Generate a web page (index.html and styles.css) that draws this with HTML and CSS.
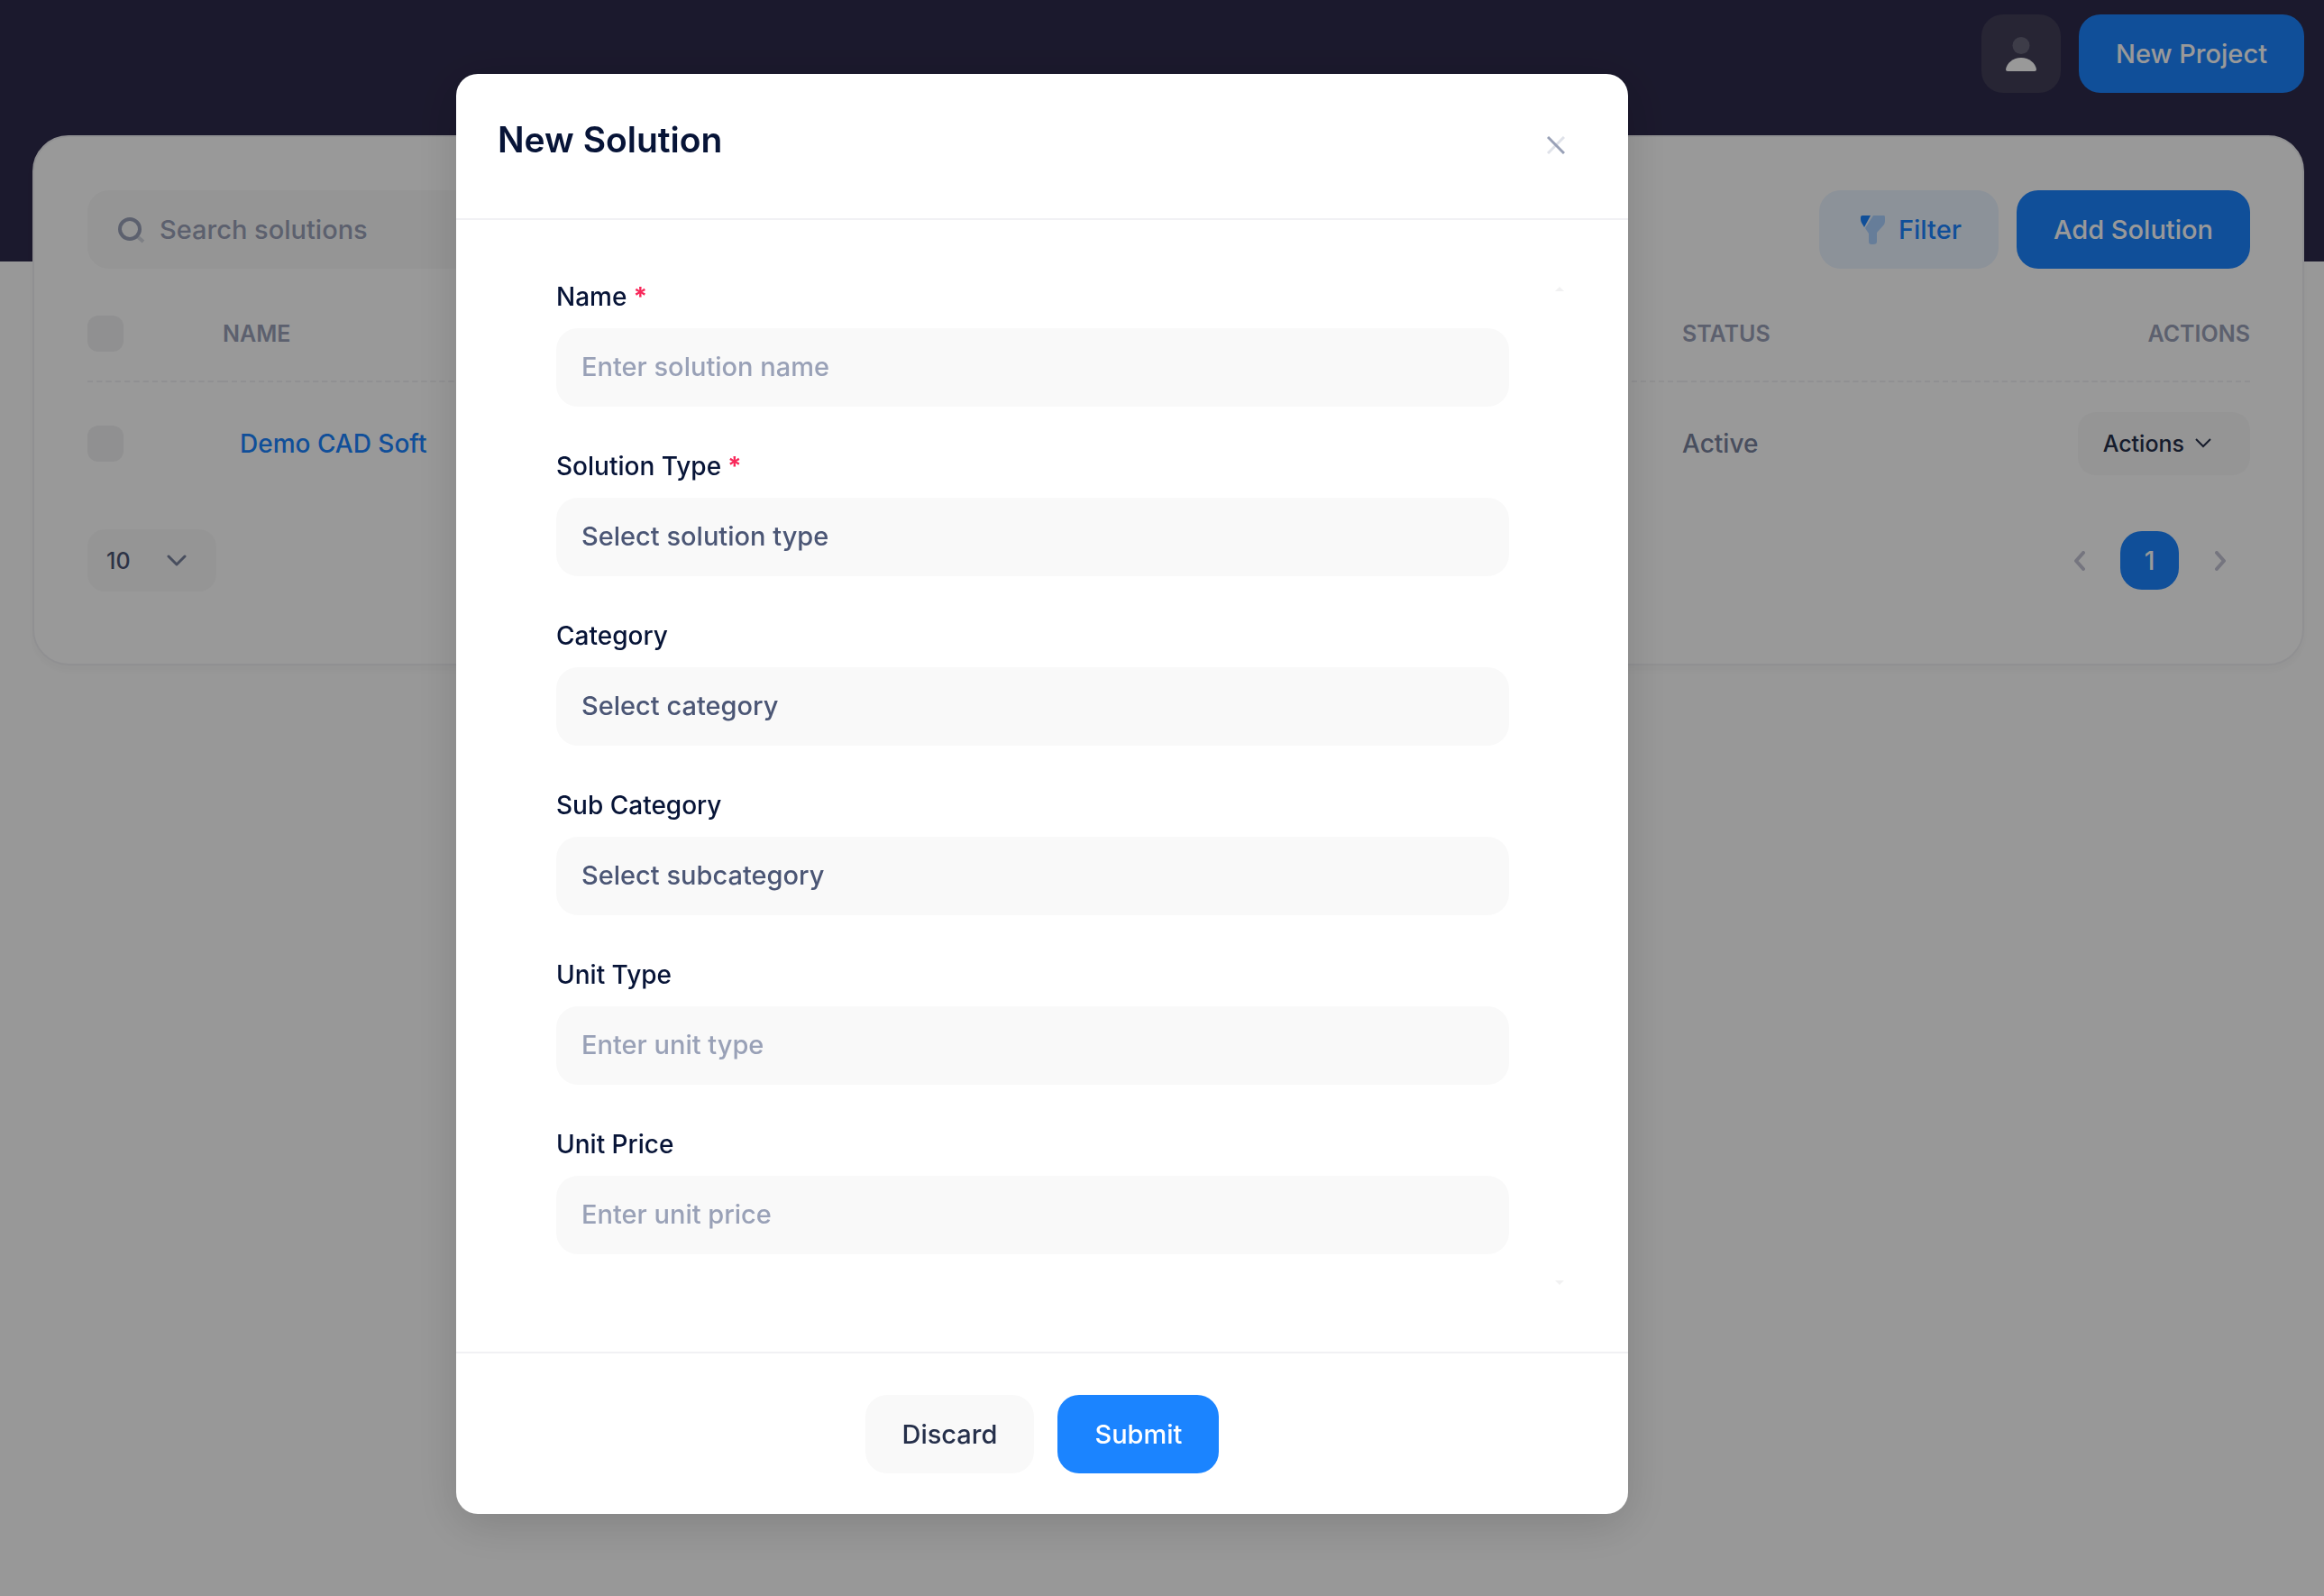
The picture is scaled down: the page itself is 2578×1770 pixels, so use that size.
FILE: index.html
```
<!DOCTYPE html>
<html lang="en">
<head>
    <meta charset="UTF-8">
    <meta name="viewport" content="width=device-width, initial-scale=1.0">
    <title>Solutions</title>
    <link rel="stylesheet" href="styles.css">
</head>
<body>
    <!-- Page header -->
    <header class="header">
        <button class="user-button" type="button" aria-label="User menu">
            <svg width="34" height="38" viewBox="0 0 34 38" fill="#fff">
                <circle cx="17" cy="9.500" r="9.500" opacity="0.2"/>
                <path d="M0 36C1 29 8 23 17 23C26 23 33 29 34 36Q34 38 32 38H2Q0 38 0 36Z"/>
            </svg>
        </button>
        <button class="button button-primary" type="button">New Project</button>
    </header>

    <!-- Solutions list -->
    <main class="card">
        <div class="toolbar">
            <div class="search">
                <svg width="30" height="30" viewBox="0 0 30 30" fill="none" stroke="#99a1b7" stroke-width="4">
                    <path d="M21 22L28 28" opacity="0.4"/>
                    <circle cx="13" cy="14" r="11"/>
                </svg>
                <input type="text" class="search-input" placeholder="Search solutions" aria-label="Search solutions">
            </div>
            <div class="toolbar-actions">
                <button class="button button-filter" type="button">
                    <svg width="28" height="32" viewBox="0 0 28 32" fill="#1b84ff">
                        <path d="M2 0H11L4 13L1 8Q0 6 0 4V2Q0 0 2 0Z"/>
                        <path opacity="0.3" d="M14 0H26Q27 0 27 2V6Q27 8 26 10L18 19V29Q18 32 14 32H12Q9 32 9 29V20L5 14Z"/>
                    </svg>
                    Filter
                </button>
                <button class="button button-primary" type="button">Add Solution</button>
            </div>
        </div>

        <table class="table">
            <thead>
                <tr>
                    <th class="col-check"><input type="checkbox" class="check" aria-label="Select all"></th>
                    <th class="col-name">Name</th>
                    <th class="col-status">Status</th>
                    <th class="col-actions">Actions</th>
                </tr>
            </thead>
            <tbody>
                <tr>
                    <td><input type="checkbox" class="check" aria-label="Select Demo CAD Soft"></td>
                    <td><a href="#" class="solution-link">Demo CAD Soft</a></td>
                    <td>Active</td>
                    <td class="col-actions">
                        <button class="row-button" type="button">
                            Actions
                            <svg width="18" height="11" viewBox="0 0 18 11" fill="none" stroke="#252f4a" stroke-width="2">
                                <path d="M1 1L9 9L17 1"/>
                            </svg>
                        </button>
                    </td>
                </tr>
            </tbody>
        </table>

        <div class="table-footer">
            <select class="page-size" aria-label="Rows per page">
                <option>10</option>
            </select>
            <nav class="pagination" aria-label="Pages">
                <button class="page-arrow" type="button" aria-label="Previous">
                    <svg width="12" height="22" viewBox="0 0 12 22" fill="none" stroke="#c4c4d4" stroke-width="4" stroke-linecap="round" stroke-linejoin="round">
                        <path d="M10 2L2 11L10 20"/>
                    </svg>
                </button>
                <button class="page-current" type="button">1</button>
                <button class="page-arrow" type="button" aria-label="Next">
                    <svg width="12" height="22" viewBox="0 0 12 22" fill="none" stroke="#c4c4d4" stroke-width="4" stroke-linecap="round" stroke-linejoin="round">
                        <path d="M2 2L10 11L2 20"/>
                    </svg>
                </button>
            </nav>
        </div>
    </main>

    <!-- New solution dialog -->
    <div class="overlay">
        <form class="modal" role="dialog" aria-labelledby="modal-title">
            <div class="modal-header">
                <h2 class="modal-title" id="modal-title">New Solution</h2>
                <button class="close-button" type="button" aria-label="Close">
                    <svg width="20" height="20" viewBox="0 0 20 20" stroke="#99a1b7" stroke-width="3">
                        <path d="M1 19L19 1" opacity="0.3"/>
                        <path d="M1 1L19 19"/>
                    </svg>
                </button>
            </div>

            <div class="modal-body">
                <div class="fields">
                    <div class="field">
                        <label for="name">Name<span class="required">*</span></label>
                        <input type="text" id="name" class="control" placeholder="Enter solution name">
                    </div>
                    <div class="field">
                        <label for="solution-type">Solution Type<span class="required">*</span></label>
                        <select id="solution-type" class="control">
                            <option>Select solution type</option>
                        </select>
                    </div>
                    <div class="field">
                        <label for="category">Category</label>
                        <select id="category" class="control">
                            <option>Select category</option>
                        </select>
                    </div>
                    <div class="field">
                        <label for="sub-category">Sub Category</label>
                        <select id="sub-category" class="control">
                            <option>Select subcategory</option>
                        </select>
                    </div>
                    <div class="field">
                        <label for="unit-type">Unit Type</label>
                        <input type="text" id="unit-type" class="control" placeholder="Enter unit type">
                    </div>
                    <div class="field">
                        <label for="unit-price">Unit Price</label>
                        <input type="text" id="unit-price" class="control" placeholder="Enter unit price">
                    </div>
                </div>
                <div class="scroll-arrows">
                    <svg width="10" height="5" viewBox="0 0 10 5" fill="#f1f1f2"><path d="M5 0L10 5H0Z"/></svg>
                    <svg width="10" height="5" viewBox="0 0 10 5" fill="#f1f1f2"><path d="M0 0H10L5 5Z"/></svg>
                </div>
            </div>

            <div class="modal-footer">
                <button class="button button-light" type="reset">Discard</button>
                <button class="button button-primary" type="submit">Submit</button>
            </div>
        </form>
    </div>
</body>
</html>
```

FILE: styles.css
```
* {
    box-sizing: border-box;
}
body {
    margin: 0;
    min-height: 100vh;
    background: linear-gradient(#2e2a4b 290px, #fefefe 290px);
    font-family: Inter, sans-serif;
    font-size: 28px;
    font-weight: 500;
    color: #78829d;
}
button, input, select {
    font: inherit;
    border: none;
    outline: none;
}

/* Buttons */
.button {
    display: flex;
    align-items: center;
    justify-content: center;
    gap: 14px;
    height: 87px;
    padding: 0 41px;
    border-radius: 24px;
    font-size: 29px;
}
.button-primary {
    background: #1b84ff;
    color: #fff;
}
.button-light {
    background: #f9f9f9;
    color: #252f4a;
}
.button-filter {
    padding: 0 41px 0 46px;
    background: #e9f3ff;
    color: #1b84ff;
}

/* Header */
.header {
    display: flex;
    justify-content: flex-end;
    gap: 20px;
    padding: 16px 22px 47px;
}
.user-button {
    display: flex;
    align-items: center;
    justify-content: center;
    width: 88px;
    height: 87px;
    padding: 0;
    border-radius: 24px;
    background: #413e58;
}

/* Card */
.card {
    margin: 0 22px 0 36px;
    padding: 59px 58px 80px 59px;
    border: 2px solid #f1f1f4;
    border-radius: 40px;
    background: #fff;
    box-shadow: 0 6px 8px rgba(0, 0, 0, 0.03);
}
.toolbar {
    display: flex;
    justify-content: space-between;
}
.search {
    display: flex;
    align-items: center;
    gap: 16px;
    width: 500px;
    height: 87px;
    padding: 0 34px;
    border-radius: 24px;
    background: #f9f9f9;
}
.search-input {
    flex: 1;
    min-width: 0;
    padding: 0;
    background: none;
    font-size: 29px;
}
::placeholder {
    color: #99a1b7;
    opacity: 1;
}
.toolbar-actions {
    display: flex;
    gap: 20px;
}

/* Table */
.table {
    width: 100%;
    table-layout: fixed;
    border-collapse: collapse;
    text-align: left;
}
.table th {
    height: 125px;
    padding: 20px 0 0;
    border-bottom: 2px dashed #f1f1f4;
    color: #99a1b7;
    font-size: 25px;
    font-weight: 600;
    text-transform: uppercase;
}
.table td {
    height: 136px;
    padding: 0;
}
.table .col-check {
    width: 150px;
}
.table .col-status {
    width: 315px;
}
.table .col-actions {
    width: 315px;
    text-align: right;
}
.check {
    appearance: none;
    display: block;
    width: 40px;
    height: 40px;
    margin: 0;
    border-radius: 12px;
    background: #f1f1f2;
}
.solution-link {
    padding-left: 19px;
    color: #1b84ff;
    text-decoration: none;
}
.row-button {
    display: inline-flex;
    align-items: center;
    gap: 12px;
    height: 70px;
    padding: 0 43px 0 28px;
    border-radius: 20px;
    background: #f9f9f9;
    color: #252f4a;
    font-size: 25px;
}

/* Table footer */
.table-footer {
    display: flex;
    align-items: center;
    justify-content: space-between;
    padding-top: 28px;
}
.page-size {
    appearance: none;
    width: 143px;
    height: 69px;
    padding: 0 21px;
    border-radius: 20px;
    background: #f9f9f9 url("data:image/svg+xml,%3Csvg xmlns='http://www.w3.org/2000/svg' viewBox='0 0 22 13' fill='none' stroke='%2378829d' stroke-width='3' stroke-linecap='round' stroke-linejoin='round'%3E%3Cpath d='M2 2L11 11L20 2'/%3E%3C/svg%3E") no-repeat right 33px center / 22px 13px;
    color: #4b5675;
    font-size: 25px;
}
.pagination {
    display: flex;
    align-items: center;
    gap: 13px;
    padding-right: 1px;
}
.page-arrow, .page-current {
    display: flex;
    align-items: center;
    justify-content: center;
    width: 65px;
    height: 65px;
    padding: 0;
    border-radius: 24px;
    background: none;
}
.page-current {
    background: #1b84ff;
    color: #fff;
}

/* Modal */
.overlay {
    position: fixed;
    inset: 0;
    padding: 82px 20px 0 506px;
    overflow: auto;
    background: rgba(0, 0, 0, 0.4);
}
.modal {
    max-width: 1300px;
    border-radius: 24px;
    background: #fff;
    box-shadow: 0 12px 50px rgba(0, 0, 0, 0.15);
}
.modal-header {
    display: flex;
    align-items: center;
    justify-content: space-between;
    height: 162px;
    padding: 0 46px 2px;
    border-bottom: 2px solid #f1f1f4;
}
.modal-title {
    margin: 0;
    padding-bottom: 14px;
    color: #071437;
    font-size: 39px;
    font-weight: 600;
}
.close-button {
    display: flex;
    align-items: center;
    justify-content: center;
    width: 68px;
    height: 68px;
    padding: 0;
    background: none;
}
.modal-body {
    display: flex;
    justify-content: space-between;
    padding: 65px 71px 74px 111px;
}
.fields {
    display: flex;
    flex-direction: column;
    gap: 46px;
    flex: 0 1 1057px;
    padding-bottom: 34px;
}
.field {
    display: flex;
    flex-direction: column;
    gap: 15px;
}
.field label {
    line-height: 40px;
    color: #071437;
    font-size: 28px;
}
.required {
    margin-left: 7px;
    color: #f8285a;
    font-weight: 700;
}
.control {
    appearance: none;
    width: 100%;
    height: 87px;
    padding: 0 28px 2px;
    border-radius: 24px;
    background: #f9f9f9;
    color: #4b5675;
    font-size: 29px;
}
.scroll-arrows {
    display: flex;
    flex-direction: column;
    justify-content: space-between;
    padding-top: 9px;
}
.modal-footer {
    display: flex;
    justify-content: center;
    gap: 26px;
    padding: 46px 46px 45px;
    border-top: 2px solid #f1f1f4;
}
```
